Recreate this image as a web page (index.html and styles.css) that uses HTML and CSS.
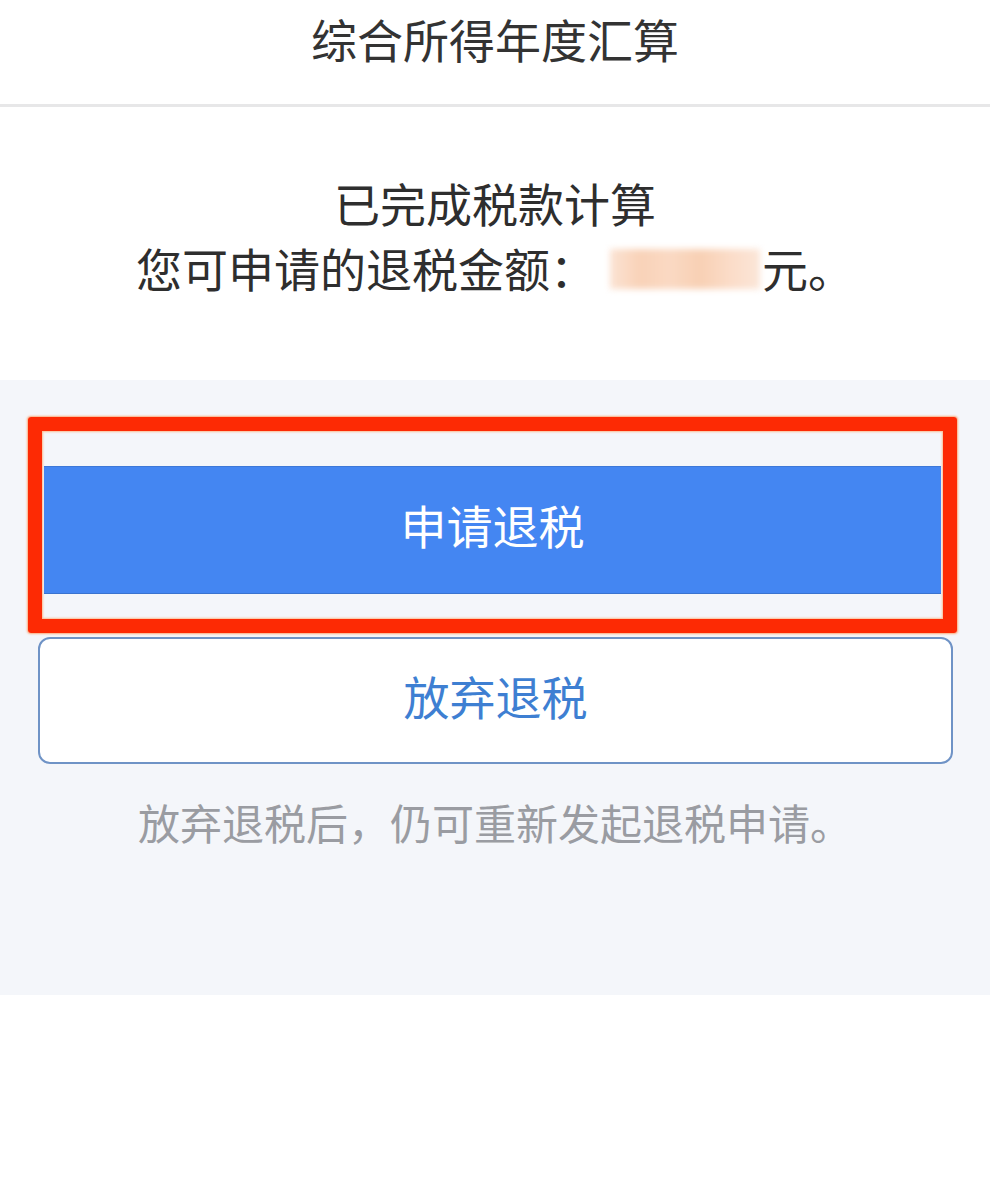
FILE: index.html
```html
<!DOCTYPE html>
<html lang="zh-CN">
<head>
<meta charset="utf-8">
<title>综合所得年度汇算</title>
<link rel="stylesheet" href="styles.css">
</head>
<body>
  <header class="topbar">
    <h1 class="topbar-title">综合所得年度汇算</h1>
  </header>
  <section class="result">
    <p class="result-line">已完成税款计算</p>
    <p class="result-line">您可申请的退税金额：<span class="amount"><span class="amount-blur"></span></span>元。</p>
  </section>
  <section class="actions">
    <div class="highlight">
      <button class="btn btn-primary" type="button">申请退税</button>
    </div>
    <button class="btn btn-outline" type="button">放弃退税</button>
    <p class="hint">放弃退税后，仍可重新发起退税申请。</p>
  </section>
</body>
</html>
```

FILE: styles.css
```css
* {
  box-sizing: border-box;
}

html, body {
  margin: 0;
  padding: 0;
  background: #ffffff;
}

body {
  font-family: "Noto Sans CJK SC", "Noto Sans", sans-serif;
  color: #333333;
}

.topbar {
  height: 107px;
  padding-top: 6px;
  border-bottom: 3px solid #e7e7e8;
  background: #ffffff;
}

.topbar-title {
  margin: 0;
  text-align: center;
  font-size: 46px;
  font-weight: 400;
  line-height: 64px;
  color: #333333;
}

.result {
  height: 273px;
  padding-top: 63px;
  background: #ffffff;
}

.result-line {
  margin: 0;
  text-align: center;
  font-size: 46px;
  line-height: 65px;
  color: #2e2e2e;
}

.amount {
  display: inline-block;
  width: 150px;
  height: 40px;
  margin: 0 2px 0 14px;
  vertical-align: -2px;
  position: relative;
}

.amount-blur {
  display: block;
  width: 100%;
  height: 100%;
  background: linear-gradient(90deg, #fbe3d3 0%, #f9d2b8 20%, #fad9c3 40%, #f8d0b4 60%, #fbdcc8 80%, #fbe6d8 100%);
  filter: blur(3px);
}

.actions {
  height: 615px;
  padding-top: 37px;
  background: #f4f6fa;
}

.highlight {
  margin: 0 33px 0 28px;
  padding: 35px 2px 25px;
  border: 14px solid #fd2a04;
  border-radius: 3px;
  box-shadow: 0 0 2px 1px rgba(255, 140, 70, 0.7), inset 0 0 2px 1px rgba(255, 150, 80, 0.6);
}

.btn {
  display: block;
  width: 100%;
  font-family: inherit;
  font-size: 46px;
  font-weight: 400;
  cursor: pointer;
}

.btn-primary {
  height: 128px;
  padding: 0 0 12px;
  border: none;
  border-top: 1px solid #3d78d8;
  border-bottom: 1px solid #3a73cf;
  background: #4486f2;
  color: #ffffff;
}

.btn-outline {
  margin: 4px 37px 0 38px;
  width: calc(100% - 75px);
  height: 127px;
  padding: 0 0 11px;
  border: 2px solid #6f93c6;
  border-radius: 12px;
  background: #ffffff;
  color: #3e7fd2;
}

.hint {
  margin: 33px 0 0;
  text-align: center;
  font-size: 42px;
  line-height: 50px;
  color: #9a9ca2;
}
```
